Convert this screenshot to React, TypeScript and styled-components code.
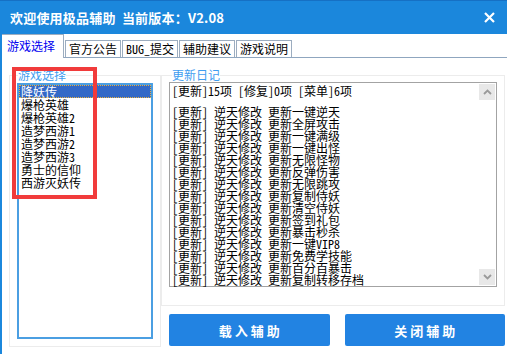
import styled, { createGlobalStyle } from 'styled-components';

const GlobalStyle = createGlobalStyle`
  html, body {
    margin: 0;
    padding: 0;
    background: #ffffff;
  }
  body {
    font-family: "Noto Sans Mono CJK SC", "Noto Sans CJK SC", "DejaVu Sans", sans-serif;
    font-size: 12px;
    color: #000;
  }
`;

const games = ['降妖传', '爆枪英雄', '爆枪英雄2', '造梦西游1', '造梦西游2', '造梦西游3', '勇士的信仰', '西游灭妖传'];

const updates = [
  '一键逆天', '全屏攻击', '一键满级', '一键出怪', '无限怪物', '反弹伤害', '无限跳攻',
  '复制侍妖', '清空侍妖', '签到礼包', '暴击秒杀', '一键VIP8', '免费学技能', '百分百暴击', '复制转移存档',
];

const tabs = ['游戏选择', '官方公告', 'BUG_提交', '辅助建议', '游戏说明'];

const Window = styled.div`
  position: relative;
  width: 507px;
  height: 354px;
  display: flex;
  flex-direction: column;
  overflow: hidden;
`;

const TitleBar = styled.div`
  height: 34px;
  flex-shrink: 0;
  box-sizing: border-box;
  background: #1b87dc;
  border-top: 1px solid #1670c4;
  display: flex;
  align-items: center;
  justify-content: space-between;
  padding: 0 12px 0 10px;
`;

const Title = styled.div`
  color: #fff;
  font-family: "Noto Sans CJK SC", sans-serif;
  font-weight: bold;
  font-size: 13px;
  letter-spacing: 0.2px;
`;

const Body = styled.div`
  flex: 1;
  display: flex;
  flex-direction: column;
  border-left: 2px solid #1b87dc;
`;

const TabBar = styled.div`
  height: 23px;
  display: flex;
  align-items: flex-end;
  gap: 1px;
  border-bottom: 1px solid #8fa6bf;
`;

const Tab = styled.div<{ $active?: boolean }>`
  box-sizing: border-box;
  height: ${({ $active }) => ($active ? '24px' : '17px')};
  margin-bottom: ${({ $active }) => ($active ? '-1px' : '0')};
  padding: 0 ${({ $active }) => ($active ? '8px 0 5px' : '3px')};
  border: 1px solid #9cadc0;
  border-left: ${({ $active }) => ($active ? 'none' : '1px solid #9cadc0')};
  border-bottom: none;
  background: #fff;
  color: ${({ $active }) => ($active ? '#0000f0' : '#000')};
  line-height: ${({ $active }) => ($active ? '22px' : '16px')};
  font-size: 12px;
  white-space: nowrap;
`;

const Content = styled.div`
  flex: 1;
  display: flex;
  padding: 11px 2px 7px 7px;
`;

const Group = styled.fieldset`
  margin: 0;
  padding: 0;
  min-width: 0;
  border: 1px solid #ececec;
  display: flex;
  flex-direction: column;
`;

const GroupLabel = styled.legend<{ $offset: number }>`
  margin-left: ${({ $offset }) => $offset}px;
  padding: 0;
  color: #3f9df0;
  font-family: "Noto Sans CJK SC", sans-serif;
  font-size: 12px;
  line-height: 12px;
`;

const LeftGroup = styled(Group)`
  width: 152px;
  box-sizing: border-box;
`;

const ListBox = styled.div`
  flex: 1;
  margin: 2px 7px 7px 7px;
  border: 2px solid #4b9fe2;
  background: #fff;
`;

const ListItem = styled.div<{ $selected?: boolean }>`
  height: 13px;
  line-height: 13px;
  padding-left: 2px;
  box-sizing: border-box;
  white-space: nowrap;
  background: ${({ $selected }) => ($selected ? '#3369c7' : 'transparent')};
  color: ${({ $selected }) => ($selected ? '#fff' : '#000')};
  outline: ${({ $selected }) => ($selected ? '1px dotted #e8b040' : 'none')};
  outline-offset: -1px;
`;

const RightColumn = styled.div`
  flex: 1;
  display: flex;
  flex-direction: column;
`;

const RightGroup = styled(Group)`
  height: 237px;
  box-sizing: border-box;
`;

const TextBox = styled.div`
  flex: 1;
  margin: 1px 7px 8px 7px;
  border: 1px solid #a3a3a3;
  display: flex;
  background: #fff;
`;

const TextArea = styled.div`
  flex: 1;
  padding: 2px 0 0 2px;
  line-height: 12px;
  white-space: pre;
`;

const Header = styled.div`
  margin-bottom: 9px;
`;

const ScrollBar = styled.div`
  width: 16px;
  margin: 1px 1px 1px 0;
  display: flex;
  flex-direction: column;
  justify-content: space-between;
`;

const ScrollButton = styled.div`
  height: 16px;
  background: #e8e8e8;
  display: flex;
  align-items: center;
  justify-content: center;
`;

const ButtonRow = styled.div`
  display: flex;
  gap: 15px;
  margin-top: 8px;
  padding-left: 8px;
`;

const ActionButton = styled.button`
  flex: 1;
  height: 32px;
  border: none;
  border-radius: 2px;
  background: #2283e2;
  color: #fff;
  font-family: "Noto Sans CJK SC", sans-serif;
  font-weight: bold;
  font-size: 13px;
  letter-spacing: 3px;
  padding: 0 0 0 3px;
`;

const Annotation = styled.div`
  position: absolute;
  left: 12px;
  top: 67px;
  width: 85px;
  height: 132px;
  box-sizing: border-box;
  border: 4px solid #f13b3b;
`;

const Chevron = ({ up }: { up?: boolean }) => (
  <svg width="9" height="6" viewBox="0 0 9 6">
    <path d={up ? 'M1 5 L4.5 1.5 L8 5' : 'M1 1 L4.5 4.5 L8 1'} stroke="#9a9a9a" strokeWidth="1.8" fill="none" />
  </svg>
);

const App = () => (
  <Window>
    <GlobalStyle />
    <TitleBar>
      <Title>欢迎使用极品辅助&nbsp;&nbsp;当前版本：V2.08</Title>
      <svg width="11" height="11" viewBox="0 0 11 11">
        <path d="M1 1 L10 10 M10 1 L1 10" stroke="#fff" strokeWidth="2.2" />
      </svg>
    </TitleBar>
    <Body>
      <TabBar>
        {tabs.map((t, i) => (
          <Tab key={t} $active={i === 0}>{t}</Tab>
        ))}
      </TabBar>
      <Content>
        <LeftGroup>
          <GroupLabel $offset={8}>游戏选择</GroupLabel>
          <ListBox>
            {games.map((g, i) => (
              <ListItem key={g} $selected={i === 0}>{g}</ListItem>
            ))}
          </ListBox>
        </LeftGroup>
        <RightColumn>
          <RightGroup>
            <GroupLabel $offset={10}>更新日记</GroupLabel>
            <TextBox>
              <TextArea>
                <Header>[更新]15项 [修复]0项 [菜单]6项</Header>
                {updates.map((u) => (
                  <div key={u}>[更新] 逆天修改 更新{u}</div>
                ))}
              </TextArea>
              <ScrollBar>
                <ScrollButton><Chevron up /></ScrollButton>
                <ScrollButton><Chevron /></ScrollButton>
              </ScrollBar>
            </TextBox>
          </RightGroup>
          <ButtonRow>
            <ActionButton>载入辅助</ActionButton>
            <ActionButton>关闭辅助</ActionButton>
          </ButtonRow>
        </RightColumn>
      </Content>
    </Body>
    <Annotation />
  </Window>
);

export default App;
